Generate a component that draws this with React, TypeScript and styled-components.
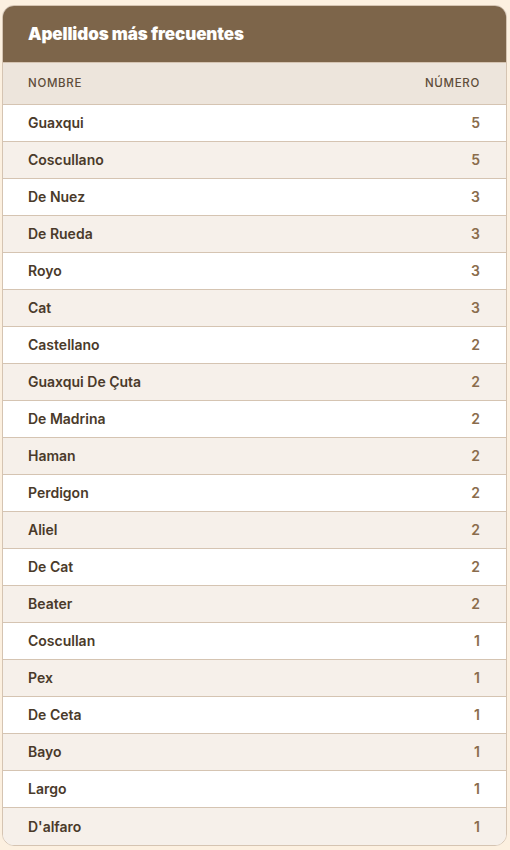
import React from "react";
import styled, { createGlobalStyle } from "styled-components";

const Global = createGlobalStyle`
  html, body { margin: 0; padding: 0; background: #fcf0e0; }
  body { font-family: Inter, "Noto Sans", sans-serif; }
`;

const Page = styled.div`
  padding: 5px 3px 5px 2px;
`;

const Card = styled.div`
  border: 1px solid #d5c4b2;
  border-radius: 12px;
  overflow: hidden;
  background: #ffffff;
`;

const Header = styled.div`
  background: #7d654a;
  height: 56px;
  display: flex;
  align-items: center;
  padding: 0 25px;
  border-bottom: 1px solid #d5c4b2;
`;

const Title = styled.h2`
  margin: 0;
  color: #ffffff;
  font-size: 17px;
  font-weight: 900;
  letter-spacing: -0.1px;
`;

const Row = styled.div<{ $alt?: boolean; $head?: boolean }>`
  box-sizing: border-box;
  display: flex;
  justify-content: space-between;
  align-items: center;
  height: ${(p) => (p.$head ? "42px" : "37px")};
  padding: 0 26px 1px 25px;
  background: ${(p) => (p.$head ? "#ede5dc" : p.$alt ? "#f6f0ea" : "#ffffff")};
  border-bottom: 1px solid #d5c4b2;
  &:last-child { border-bottom: none; }
`;

const HeadCell = styled.span`
  font-size: 11.5px;
  font-weight: 500;
  letter-spacing: 0.7px;
  color: #5e4c39;
  text-transform: uppercase;
`;

const Name = styled.span`
  font-size: 14px;
  font-weight: 600;
  color: #4a3a2a;
`;

const Num = styled.span`
  font-size: 14px;
  font-weight: 600;
  color: #8a6c4c;
`;

const data: [string, number][] = [
  ["Guaxqui", 5],
  ["Coscullano", 5],
  ["De Nuez", 3],
  ["De Rueda", 3],
  ["Royo", 3],
  ["Cat", 3],
  ["Castellano", 2],
  ["Guaxqui De Çuta", 2],
  ["De Madrina", 2],
  ["Haman", 2],
  ["Perdigon", 2],
  ["Aliel", 2],
  ["De Cat", 2],
  ["Beater", 2],
  ["Coscullan", 1],
  ["Pex", 1],
  ["De Ceta", 1],
  ["Bayo", 1],
  ["Largo", 1],
  ["D'alfaro", 1],
];

export default function App() {
  return (
    <>
      <Global />
      <Page>
        <Card>
          <Header>
            <Title>Apellidos más frecuentes</Title>
          </Header>
          <Row $head>
            <HeadCell>Nombre</HeadCell>
            <HeadCell>Número</HeadCell>
          </Row>
          {data.map(([n, c], i) => (
            <Row key={n} $alt={i % 2 === 1}>
              <Name>{n}</Name>
              <Num>{c}</Num>
            </Row>
          ))}
        </Card>
      </Page>
    </>
  );
}
